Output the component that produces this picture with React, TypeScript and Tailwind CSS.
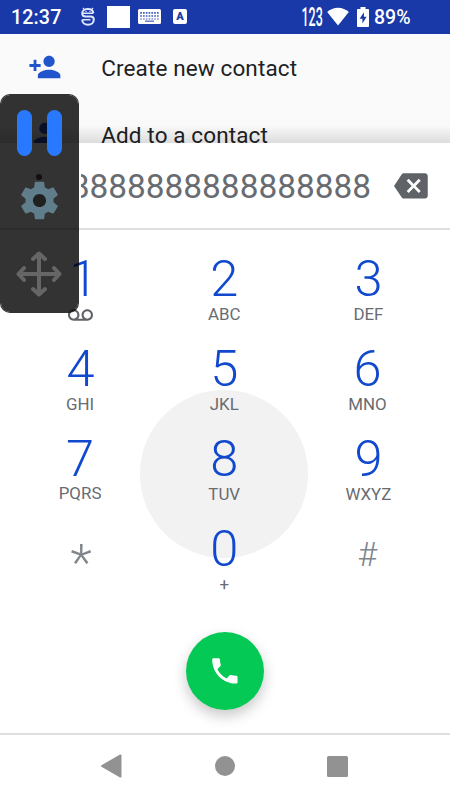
import clsx from "clsx";
import type { ReactNode } from "react";

type DialKey = {
  digit: string;
  letters?: string;
};

const KEYS: DialKey[] = [
  { digit: "1" },
  { digit: "2", letters: "ABC" },
  { digit: "3", letters: "DEF" },
  { digit: "4", letters: "GHI" },
  { digit: "5", letters: "JKL" },
  { digit: "6", letters: "MNO" },
  { digit: "7", letters: "PQRS" },
  { digit: "8", letters: "TUV" },
  { digit: "9", letters: "WXYZ" },
  { digit: "*" },
  { digit: "0", letters: "+" },
  { digit: "#" },
];

const PATHS = {
  personAdd:
    "M15 12c2.21 0 4-1.79 4-4s-1.79-4-4-4-4 1.79-4 4 1.79 4 4 4zm-9-2V7H4v3H1v2h3v3h2v-3h3v-2H6zm9 4c-2.67 0-8 1.34-8 4v2h16v-2c0-2.66-5.33-4-8-4z",
  person:
    "M12 12c2.21 0 4-1.79 4-4s-1.79-4-4-4-4 1.79-4 4 1.79 4 4 4zm0 2c-2.67 0-8 1.34-8 4v2h16v-2c0-2.66-5.33-4-8-4z",
  backspace:
    "M22 3H7c-.69 0-1.23.35-1.59.88L0 12l5.41 8.11c.36.53.9.89 1.59.89h15c1.1 0 2-.9 2-2V5c0-1.1-.9-2-2-2zm-3 12.59L17.59 17 14 13.41 10.41 17 9 15.59 12.59 12 9 8.41 10.41 7 14 10.59 17.59 7 19 8.41 15.41 12 19 15.59z",
  phone:
    "M6.62 10.79c1.44 2.83 3.76 5.14 6.59 6.59l2.2-2.2c.27-.27.67-.36 1.02-.24 1.12.37 2.33.57 3.57.57.55 0 1 .45 1 1V20c0 .55-.45 1-1 1-9.39 0-17-7.61-17-17 0-.55.45-1 1-1h3.5c.55 0 1 .45 1 1 0 1.25.2 2.45.57 3.57.11.35.03.74-.25 1.02l-2.2 2.2z",
  voicemail:
    "M18.5 6C15.46 6 13 8.46 13 11.5c0 1.33.47 2.55 1.26 3.5H9.74c.79-.95 1.26-2.17 1.26-3.5C11 8.46 8.54 6 5.5 6S0 8.46 0 11.5 2.46 17 5.5 17h13c3.04 0 5.5-2.46 5.5-5.5S21.54 6 18.5 6zm-13 9C3.57 15 2 13.43 2 11.5S3.57 8 5.5 8 9 9.57 9 11.5 7.43 15 5.5 15zm13 0c-1.93 0-3.5-1.57-3.5-3.5S16.57 8 18.5 8 22 9.57 22 11.5 20.43 15 18.5 15z",
  settings:
    "M19.43 12.98c.04-.32.07-.64.07-.98s-.03-.66-.07-.98l2.11-1.65c.19-.15.24-.42.12-.64l-2-3.46c-.12-.22-.39-.3-.61-.22l-2.49 1c-.52-.4-1.08-.73-1.69-.98l-.38-2.65C14.46 2.18 14.25 2 14 2h-4c-.25 0-.46.18-.49.42l-.38 2.65c-.61.25-1.17.59-1.69.98l-2.49-1c-.23-.09-.49 0-.61.22l-2 3.46c-.13.22-.07.49.12.64l2.11 1.65c-.04.32-.07.65-.07.98s.03.66.07.98l-2.11 1.65c-.19.15-.24.42-.12.64l2 3.46c.12.22.39.3.61.22l2.49-1c.52.4 1.08.73 1.69.98l.38 2.65c.03.24.24.42.49.42h4c.25 0 .46-.18.49-.42l.38-2.65c.61-.25 1.17-.59 1.69-.98l2.49 1c.23.09.49 0 .61-.22l2-3.46c.12-.22.07-.49-.12-.64l-2.11-1.65zM12 15.5c-1.93 0-3.5-1.57-3.5-3.5s1.57-3.5 3.5-3.5 3.5 1.57 3.5 3.5-1.57 3.5-3.5 3.5z",
};

function Icon({ path, className }: { path: string; className: string }) {
  return (
    <svg viewBox="0 0 24 24" fill="currentColor" className={clsx("shrink-0", className)}>
      <path d={path} />
    </svg>
  );
}

function StatusBar() {
  return (
    <header className="relative flex h-[33.5px] items-center bg-[#1a39a8] pl-[11px] text-white shadow-[0_1px_1px_rgba(0,0,0,0.25)]">
      <span className="w-[51px] pt-[2px] text-[19.7px] leading-none font-medium tracking-[0.1px]">12:37</span>

      <svg viewBox="0 0 14 19" className="ml-[18.5px] h-[19px] w-[14px]" fill="none" stroke="#dfe6ff">
        <path d="M3.2 2.6 2 .8M10.8 2.6 12 .8" strokeWidth="1.2" />
        <path
          d="M12.3 6.2C12 3.6 9.9 2.1 7 2.1S1.2 3.6 1.2 6.2c0 2.2 1.3 3.2 3.3 3.2h5c2.2 0 3.3 1.2 3.3 3.2 0 3-2.3 5.2-5.8 5.2S1.2 15.6 1.2 12.8"
          strokeWidth="2"
        />
        <path d="M1.2 6.3h11.2M1.2 12.7h8.3" strokeWidth="1.5" />
        <path d="M4.4 4.5h1.2M8.4 4.5h1.2" strokeWidth="1.2" />
      </svg>

      <span className="ml-[12.5px] h-[22px] w-[23px] bg-white" />

      <svg viewBox="0 0 23 15" className="ml-[8px] h-[15px] w-[23px]">
        <rect width="23" height="15" rx="1.5" fill="#fff" />
        <g stroke="#4560bd" strokeWidth="1.7" strokeDasharray="1.7 1.1">
          <path d="M2.2 3.8h18.6M2.2 7h18.6" />
          <path d="M2.2 10h18.6" strokeWidth="1.1" />
        </g>
        <path d="M7 12.2h9" stroke="#4560bd" strokeWidth="1.2" />
      </svg>

      <span className="ml-[12px] flex h-[15px] w-[14px] items-center justify-center rounded-[2px] bg-white text-[11px] leading-none font-black text-[#1a39a8]">
        A
      </span>

      <span className="ml-[115.5px] flex w-[20px] justify-center">
        <span className="scale-x-[0.48] text-[26px] leading-none font-medium">123</span>
      </span>

      <svg viewBox="0 0 22 19" className="ml-[4.5px] h-[19px] w-[22px]" fill="#fff">
        <path d="M11 18.6.2 5C3.2 2.3 6.8.7 11 .7S18.8 2.3 21.8 5z" />
      </svg>

      <svg viewBox="0 0 12 20" className="ml-[8px] h-[20px] w-[12px]">
        <path d="M3.5 0h5v2H11c.6 0 1 .4 1 1v16c0 .6-.4 1-1 1H1c-.6 0-1-.4-1-1V3c0-.6.4-1 1-1h2.5z" fill="#fff" />
        <path d="M6.9 5.2 2.6 11.8h2.8v4.8l4.2-6.8H6.9z" fill="#1a39a8" />
      </svg>

      <span className="ml-[5px] pt-[2px] text-[19.5px] leading-none font-medium">89%</span>
    </header>
  );
}

function ContactAction({ icon, children }: { icon: string; children: ReactNode }) {
  return (
    <div className="flex h-[67px] items-center pl-7">
      <Icon path={icon} className="size-[33.75px] text-[#2255cc]" />
      <span className="ml-[39.5px] pt-[2px] text-[22.5px] leading-none tracking-[0.12px] whitespace-nowrap text-[#202124]">
        {children}
      </span>
    </div>
  );
}

function KeyButton({ digit, letters }: DialKey) {
  const isSymbol = digit === "*" || digit === "#";

  return (
    <div className="relative flex h-[90px] flex-col items-center">
      {digit === "8" && (
        <span className="absolute top-[-44px] left-1/2 -z-10 size-[168px] -translate-x-1/2 rounded-full bg-[#f2f2f2]" />
      )}
      <span
        className={clsx(
          "h-[50px] font-light",
          !isSymbol && "text-[50.6px] leading-[50px] text-[#1049cd]",
          digit === "1" && "pl-[7px]",
          digit === "4" && "pl-[1px]",
          digit === "6" && "pr-[2px]",
          digit === "*" && "pt-[14px] pl-[2px] text-[50px] leading-[50px] text-[#80868b]",
          digit === "#" && "pt-[6px] pr-[2px] text-[33.75px] leading-[50px] text-[#80868b]",
        )}
      >
        {digit}
      </span>
      {digit === "1" && <Icon path={PATHS.voicemail} className="mt-[-1px] ml-[1px] size-[25px] text-[#5f6368]" />}
      {letters && (
        <span
          className={clsx(
            "text-[16.9px] leading-5 text-[#686c71]",
            letters === "PQRS" && "-mt-px",
            letters === "MNO" && "pr-[2px]",
          )}
        >
          {letters}
        </span>
      )}
    </div>
  );
}

function FloatingControls() {
  return (
    <aside className="absolute top-[94px] left-0 z-20 flex h-[219px] w-[78.5px] flex-col items-center rounded-[10px] border border-black/80 bg-black/80 bg-clip-padding pt-[15px]">
      <div className="flex gap-[15px]">
        <span className="h-[46px] w-[15px] rounded-full bg-[#2979ff]" />
        <span className="h-[46px] w-[15px] rounded-full bg-[#2979ff]" />
      </div>
      <span className="mt-[18px] size-[6px] rounded-full bg-[#111111]" />
      <span className="mt-[-2px] flex size-[45px] items-center justify-center bg-[radial-gradient(circle,#202020_7px,transparent_8px)]">
        <Icon path={PATHS.settings} className="size-[45px] text-[#607d8b]" />
      </span>
      <svg
        viewBox="0 0 46 46"
        className="mt-[27.5px] size-[46px]"
        fill="none"
        stroke="#666666"
        strokeWidth="4"
        strokeLinecap="round"
        strokeLinejoin="round"
      >
        <path d="M23 3v40M3 23h40" />
        <path d="m17 8 6-5.5L29 8M17 38l6 5.5 6-5.5M8 17l-5.5 6L8 29M38 17l5.5 6-5.5 6" />
      </svg>
    </aside>
  );
}

function NavigationBar() {
  return (
    <nav className="flex h-[67px] items-center border-t-2 border-[#dedede] pb-[3px] pl-[101px] text-[#929292]">
      <svg viewBox="0 0 21 24" className="h-[24px] w-[21px]" fill="currentColor">
        <path d="M.5 11.2 19 .6c.7-.4 1.5 0 1.5.8v21.2c0 .8-.8 1.2-1.5.8L.5 12.8c-.6-.4-.6-1.2 0-1.6z" />
      </svg>
      <span className="ml-[93px] size-[20px] rounded-full bg-current" />
      <span className="ml-[92px] size-[21px] rounded-[1.5px] bg-current" />
    </nav>
  );
}

export default function App() {
  return (
    <div className="relative isolate flex h-[800px] w-[450px] flex-col overflow-hidden bg-white font-[Roboto,sans-serif]">
      <StatusBar />

      <section className="relative h-[109.5px] overflow-hidden bg-[#fafafa]">
        <ContactAction icon={PATHS.personAdd}>Create new contact</ContactAction>
        <ContactAction icon={PATHS.person}>Add to a contact</ContactAction>
        <div className="absolute inset-x-0 bottom-0 h-[18px] bg-linear-to-b from-transparent to-black/12" />
      </section>

      <section className="flex h-[87px] items-center border-b-2 border-[#dedede] pl-[81px]">
        <div className="flex w-[290px] justify-end overflow-hidden pt-[3px]">
          <span className="text-[33.4px] leading-10 whitespace-nowrap text-[#686c71]">
            8888888888888888
          </span>
        </div>
        <Icon path={PATHS.backspace} className="ml-[23px] size-[33.75px] text-[#5f6368]" />
      </section>

      <main className="flex h-[503px] flex-col items-center pt-6">
        <div className="grid w-full grid-cols-3 pr-[9.5px] pl-2">
          {KEYS.map((key) => (
            <KeyButton key={key.digit} {...key} />
          ))}
        </div>
        <button className="mt-[17.5px] flex size-[78.75px] items-center justify-center rounded-full bg-[#04c954] text-white shadow-[0_6px_14px_rgba(0,0,0,0.22)]">
          <Icon path={PATHS.phone} className="size-[33.75px]" />
        </button>
      </main>

      <NavigationBar />
      <FloatingControls />
    </div>
  );
}
